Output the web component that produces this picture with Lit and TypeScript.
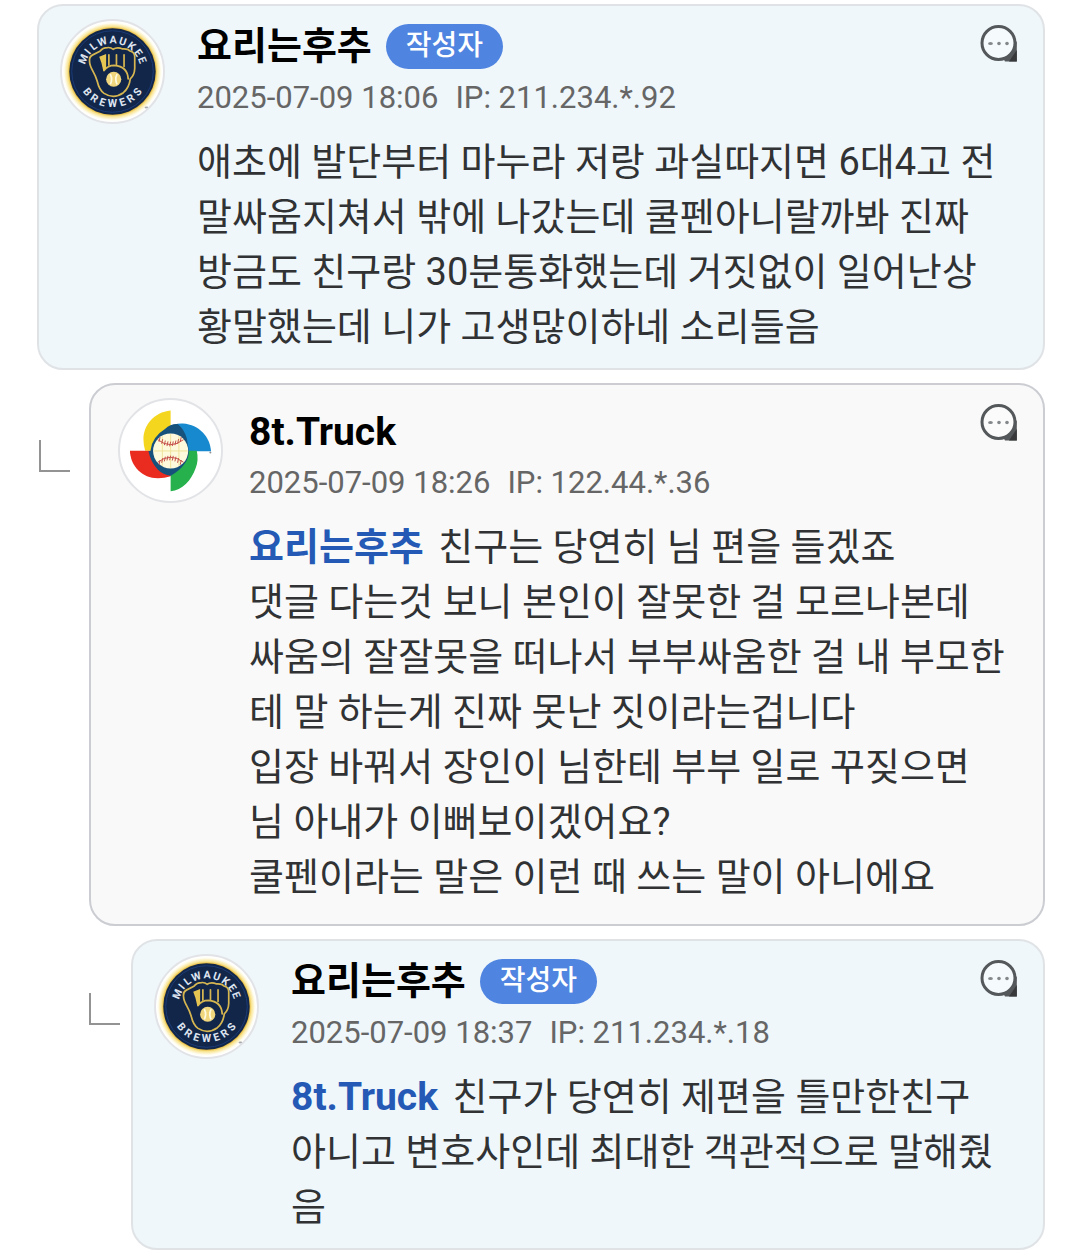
import { LitElement, html, css, svg } from "lit";
import { customElement, property } from "lit/decorators.js";

interface Comment {
  author: string;
  writer: boolean;
  team: "brewers" | "classic";
  date: string;
  ip: string;
  depth: number;
  mention?: string;
  body: string;
}

const COMMENTS: Comment[] = [
  {
    author: "요리는후추", writer: true, team: "brewers", depth: 0,
    date: "2025-07-09 18:06", ip: "211.234.*.92",
    body: "애초에 발단부터 마누라 저랑 과실따지면 6대4고 전말싸움지쳐서 밖에 나갔는데 쿨펜아니랄까봐 진짜 방금도 친구랑 30분통화했는데 거짓없이 일어난상황말했는데 니가 고생많이하네 소리들음",
  },
  {
    author: "8t.Truck", writer: false, team: "classic", depth: 1,
    date: "2025-07-09 18:26", ip: "122.44.*.36", mention: "요리는후추",
    body: "친구는 당연히 님 편을 들겠죠\n댓글 다는것 보니 본인이 잘못한 걸 모르나본데\n싸움의 잘잘못을 떠나서 부부싸움한 걸 내 부모한테 말 하는게 진짜 못난 짓이라는겁니다\n입장 바꿔서 장인이 님한테 부부 일로 꾸짖으면\n님 아내가 이뻐보이겠어요?\n쿨펜이라는 말은 이런 때 쓰는 말이 아니에요",
  },
  {
    author: "요리는후추", writer: true, team: "brewers", depth: 2,
    date: "2025-07-09 18:37", ip: "211.234.*.18", mention: "8t.Truck",
    body: "친구가 당연히 제편을 틀만한친구\n아니고 변호사인데 최대한 객관적으로 말해줬음",
  },
];

/** Letters of the round badge, each with its angle on the ring. */
const TOP_RING: [string, number][] = [["M", -67], ["I", -51], ["L", -37], ["W", -19], ["A", 1], ["U", 19], ["K", 37], ["E", 54], ["E", 69]];
const BOTTOM_RING: [string, number][] = [["B", 51], ["R", 34], ["E", 18], ["W", 0], ["E", -18], ["R", -34], ["S", -51]];

/** True when the text has only Latin glyphs, which are drawn a step larger. */
const isLatin = (text: string) => /^[\x20-\x7e]+$/.test(text);

@customElement("team-logo")
export class TeamLogo extends LitElement {
  @property() team = "brewers";

  static styles = css`
    :host { display: block; box-sizing: border-box; width: 105px; height: 105px; border: 2px solid #e2e3e6; border-radius: 50%; background: #fff; overflow: hidden; }
    svg { display: block; width: 100%; height: 100%; }
    .letter { font: 700 11px Roboto, sans-serif; fill: #dfe5f0; text-anchor: middle; }
  `;

  private brewers() {
    return svg`
      <defs>
        <radialGradient id="halo">
          <stop offset="0.87" stop-color="#e6b93c"></stop>
          <stop offset="0.91" stop-color="#f9e594"></stop>
          <stop offset="0.98" stop-color="#fffef6"></stop>
        </radialGradient>
      </defs>
      <circle cx="52" cy="52" r="51" fill="url(#halo)"></circle>
      <circle cx="52" cy="52" r="44.5" fill="#12264a"></circle>
      <circle cx="52" cy="52" r="42" fill="none" stroke="#1c3c78"></circle>
      ${TOP_RING.map(([c, a]) => svg`<text class="letter" x="52" y="23" transform="rotate(${a} 52 52)">${c}</text>`)}
      ${BOTTOM_RING.map(([c, a]) => svg`<text class="letter" x="52" y="89" transform="rotate(${a} 52 52)">${c}</text>`)}
      <g transform="translate(22 22) scale(0.355)">
        <g fill="none" stroke="#d6b650" stroke-width="5" stroke-linejoin="round" stroke-linecap="round">
          <path d="M18 56 Q16 42 26 37 L48 26 Q56 15 70 15 Q80 14 86 20 Q98 12 114 19 Q130 18 135 25 Q149 28 149 42 V76 Q148 96 136 106 Q133 132 116 146 Q88 166 60 148 Q46 138 40 112 Q36 98 28 84 Q18 66 18 56Z"></path>
          <path d="M60 82 Q70 67 90 67 Q128 70 130 106"></path>
          <path d="M74 36 V66 M96 36 V64 M118 36 V70"></path>
        </g>
        <path d="M46 42 L66 34 V74 L58 84 Q54 60 46 42Z" fill="#e6c652"></path>
        <circle cx="88" cy="107" r="22" fill="#f0d67c"></circle>
        <path d="M78 92 Q86 107 78 122 M98 92 Q90 107 98 122" fill="none" stroke="#fffbe0" stroke-width="5"></path>
      </g>
      <ellipse cx="87" cy="89" rx="2" ry="1" fill="#a5a8ad"></ellipse>`;
  }

  private classic() {
    const stitches = [-32, -24, -16, -8, 0, 8, 16, 24, 32];
    return svg`
      <g transform="translate(-20.5 -20.5) scale(0.341)">
        <path d="M213 92 C162 97 130 138 131 180 Q131 198 136 213 H213Z" fill="#f5d61e"></path>
        <path d="M200 146 Q222 130 250 131 C300 134 332 172 335 215 H213Z" fill="#1689cf"></path>
        <path d="M292 213 Q298 240 289 265 C275 305 248 332 213 336 V213Z" fill="#27b14c"></path>
        <path d="M90 213 H213 V290 Q190 298 165 296 C120 290 92 255 90 213Z" fill="#ea2b20"></path>
        <path d="M196 148 Q212 132 235 133 Q254 148 262 176 L268 214 Q268 238 254 254 Q242 272 213 289 Q190 286 174 270 Q152 246 146 214 H152 Q156 172 196 148Z" fill="#17527c"></path>
        <circle cx="213" cy="214" r="53" fill="#fdf9dc"></circle>
        <path d="M162 214 H264 M213 163 V265 M188 170 V258 M238 170 V258" stroke="#efe39a" stroke-width="3"></path>
        <g fill="none" stroke="#c5504a" stroke-width="3">
          <path d="M174 180 Q213 210 252 180 M174 248 Q213 218 252 248"></path>
          ${stitches.map((x) => {
            const bend = (x * x) / 75;
            return svg`<path d="M${213 + x} ${186 - bend} l-3 14 M${213 + x} ${228 + bend} l-3 14"></path>`;
          })}
        </g>
        <circle cx="333" cy="219" r="3" fill="#8a9099"></circle>
      </g>`;
  }

  render() {
    return html`<svg viewBox="0 0 104 104" role="img" aria-label=${this.team}>
      ${this.team === "brewers" ? this.brewers() : this.classic()}
    </svg>`;
  }
}

@customElement("comment-card")
export class CommentCard extends LitElement {
  @property({ attribute: false }) comment!: Comment;

  static styles = css`
    :host { display: block; }
    .row { display: flex; align-items: flex-start; }
    .elbow { flex: none; box-sizing: border-box; width: 31px; height: 32px; border: solid #939393; border-width: 0 0 2px 2px; }
    .d1 .elbow { margin: 57px 19px 0 2px; }
    .d2 { padding-left: 52px; }
    .d2 .elbow { margin: 54px 11px 0 0; }
    .card { flex: 1; min-width: 0; display: flex; align-items: flex-start; gap: 32px; border: 2px solid #e0e3e6; border-radius: 26px; background: #eff7fb; padding: 13px 32px 13px 21px; }
    .card.reply { gap: 26px; border-color: #cbcdd2; background: #f9f9f9; padding: 13px 32px 19px 27px; }
    team-logo { flex: none; }
    .content { flex: 1; min-width: 0; }
    .reply .content { padding-top: 7px; }
    .head { display: flex; align-items: flex-start; margin-right: -7px; }
    .who { flex: 1; min-width: 0; }
    .name { display: flex; align-items: center; gap: 14px; margin: 0; padding-bottom: 1px; font-size: 38px; line-height: 54px; font-weight: 700; color: #000; }
    .reply .name { padding: 1px 0 0; line-height: 53px; }
    .badge { height: 45px; line-height: 43px; padding: 0 20px; border-radius: 23px; background: #4f84e0; color: #fff; font-size: 28px; font-weight: 500; }
    .latin { font-size: 39px; }
    .meta { display: flex; gap: 17px; margin: 0; font-size: 31px; line-height: 48px; color: #666; }
    .answer { flex: none; margin: 6px 0 0; padding: 0; border: 0; background: none; width: 38px; height: 38px; }
    .reply .answer { margin-top: -1px; }
    .answer svg { display: block; }
    .body { margin: 13px 0 0; font-size: 38px; line-height: 55px; color: #303234; white-space: pre-line; }
    .mention { margin-right: 5px; font-weight: 700; color: #2459b5; text-decoration: none; }
  `;

  render() {
    const c = this.comment;
    return html`<div class="row d${c.depth}">
      ${c.depth ? html`<span class="elbow"></span>` : ""}
      <article class="card ${c.writer ? "" : "reply"}">
        <team-logo team=${c.team}></team-logo>
        <div class="content">
          <header class="head">
            <div class="who">
              <h3 class="name"><span class=${isLatin(c.author) ? "latin" : ""}>${c.author}</span>${c.writer ? html`<span class="badge">작성자</span>` : ""}</h3>
              <p class="meta"><time>${c.date}</time><span>IP: ${c.ip}</span></p>
            </div>
            <button class="answer" aria-label="답글">
              <svg width="38" height="38" viewBox="0 0 38 38">
                <circle cx="18.5" cy="18" r="16.5" fill="#fff" fill-opacity="0.4" stroke="#55585a" stroke-width="3"></circle>
                <path d="M34 14 L36.8 17 V36.5 H25 L23 33 L30 30.5 L34 25Z" fill="#55585a"></path>
                <path d="M36.8 25 V36.5 H29 L32 32Z" fill="#38393b"></path>
                <g fill="#85888b"><ellipse cx="10.5" cy="18.5" rx="2.4" ry="1.6"></ellipse><circle cx="19" cy="18.5" r="1.8"></circle><circle cx="27" cy="18.5" r="1.8"></circle></g>
              </svg>
            </button>
          </header>
          <p class="body">${c.mention ? html`<a class="mention ${isLatin(c.mention) ? "latin" : ""}" href="#">${c.mention}</a> ` : ""}${c.body}</p>
        </div>
      </article>
    </div>`;
  }
}

@customElement("app-root")
export class AppRoot extends LitElement {
  static styles = css`
    :host { display: block; background: #fff; font-family: Roboto, "Noto Sans CJK KR", sans-serif; }
    .thread { display: flex; flex-direction: column; gap: 13px; padding: 4px 34px 5px 37px; }
  `;

  render() {
    return html`<main class="thread" lang="ko">
      ${COMMENTS.map((c) => html`<comment-card .comment=${c}></comment-card>`)}
    </main>`;
  }
}
